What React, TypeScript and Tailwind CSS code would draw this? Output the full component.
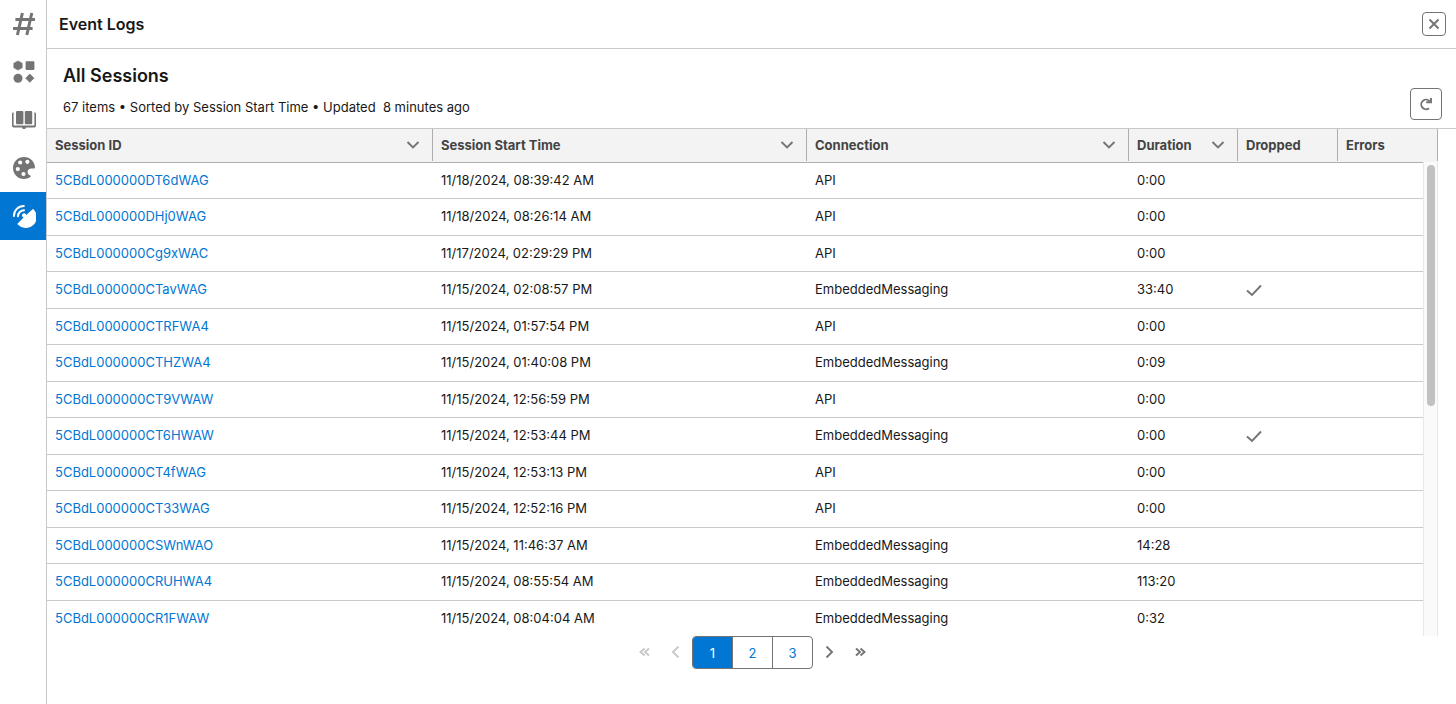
import type { ReactNode } from "react";
import { clsx } from "clsx";

type Session = {
  id: string;
  start: string;
  connection: string;
  duration: string;
  dropped?: boolean;
};

const SESSIONS: Session[] = [
  { id: "5CBdL000000DT6dWAG", start: "11/18/2024, 08:39:42 AM", connection: "API", duration: "0:00" },
  { id: "5CBdL000000DHj0WAG", start: "11/18/2024, 08:26:14 AM", connection: "API", duration: "0:00" },
  { id: "5CBdL000000Cg9xWAC", start: "11/17/2024, 02:29:29 PM", connection: "API", duration: "0:00" },
  { id: "5CBdL000000CTavWAG", start: "11/15/2024, 02:08:57 PM", connection: "EmbeddedMessaging", duration: "33:40", dropped: true },
  { id: "5CBdL000000CTRFWA4", start: "11/15/2024, 01:57:54 PM", connection: "API", duration: "0:00" },
  { id: "5CBdL000000CTHZWA4", start: "11/15/2024, 01:40:08 PM", connection: "EmbeddedMessaging", duration: "0:09" },
  { id: "5CBdL000000CT9VWAW", start: "11/15/2024, 12:56:59 PM", connection: "API", duration: "0:00" },
  { id: "5CBdL000000CT6HWAW", start: "11/15/2024, 12:53:44 PM", connection: "EmbeddedMessaging", duration: "0:00", dropped: true },
  { id: "5CBdL000000CT4fWAG", start: "11/15/2024, 12:53:13 PM", connection: "API", duration: "0:00" },
  { id: "5CBdL000000CT33WAG", start: "11/15/2024, 12:52:16 PM", connection: "API", duration: "0:00" },
  { id: "5CBdL000000CSWnWAO", start: "11/15/2024, 11:46:37 AM", connection: "EmbeddedMessaging", duration: "14:28" },
  { id: "5CBdL000000CRUHWA4", start: "11/15/2024, 08:55:54 AM", connection: "EmbeddedMessaging", duration: "113:20" },
  { id: "5CBdL000000CR1FWAW", start: "11/15/2024, 08:04:04 AM", connection: "EmbeddedMessaging", duration: "0:32" },
];

const COLUMNS = [
  { label: "Session ID",         width: "w-[386px]", menu: true },
  { label: "Session Start Time", width: "w-[374px]", menu: true },
  { label: "Connection",         width: "w-[322px]", menu: true },
  { label: "Duration",           width: "w-[109px]", menu: true },
  { label: "Dropped",            width: "w-[100px]", menu: false },
  { label: "Errors",             width: "w-[100px]", menu: false },
];

const NAV = [
  { label: "Channels",   icon: <HashIcon /> },
  { label: "Components", icon: <ShapesIcon /> },
  { label: "Library",    icon: <BookIcon /> },
  { label: "Theme",      icon: <PaletteIcon /> },
  { label: "Event Logs", icon: <DishIcon />, active: true },
];

export default function App() {
  return (
    <div className="flex h-screen bg-white font-['Inter','Liberation_Sans',sans-serif] text-[13px] leading-5 text-[#181818]">
      <nav className="flex w-[47px] shrink-0 flex-col border-r border-[#c9c9c9]">
        {NAV.map((n) => (
          <button
            key={n.label}
            aria-label={n.label}
            className={clsx(
              "flex h-12 items-center justify-center",
              n.active ? "bg-[#0176d3] text-white" : "text-[#747474]"
            )}
          >
            {n.icon}
          </button>
        ))}
      </nav>

      <main className="flex min-w-0 flex-1 flex-col">
        <header className="flex h-[49px] shrink-0 items-center justify-between border-b border-[#c9c9c9] pr-[10px] pl-3">
          <h1 className="text-base font-semibold">Event Logs</h1>
          <button
            aria-label="Close"
            className="flex size-6 items-center justify-center rounded border border-[#747474] text-[#747474]"
          >
            <Glyph size={12} d="M1.5 1.5 10.5 10.5M10.5 1.5 1.5 10.5" />
          </button>
        </header>

        <section className="flex h-20 shrink-0 items-end justify-between border-b border-[#c9c9c9] pr-[14px] pb-2 pl-4">
          <div className="flex flex-col gap-[9px] pb-[3px]">
            <h2 className="text-lg leading-6 font-semibold">All Sessions</h2>
            <p className="whitespace-pre">67 items • Sorted by Session Start Time • Updated  8 minutes ago</p>
          </div>
          <button
            aria-label="Refresh"
            className="flex size-8 items-center justify-center rounded border border-[#747474] text-[#747474]"
          >
            <RefreshIcon />
          </button>
        </section>

        <SessionTable />
        <Pagination />
      </main>
    </div>
  );
}

function SessionTable() {
  return (
    <div className="relative mr-[18px] min-h-0 flex-1 overflow-hidden">
      <table className="w-full table-fixed border-separate border-spacing-0 text-left">
        <thead>
          <tr>
            {COLUMNS.map((c) => (
              <th key={c.label} className={clsx("h-[34px] border-b border-[#aeaeae] bg-[#f3f3f3] p-0 align-top", c.width)}>
                <div className="flex h-8 items-center justify-between border-r border-[#aeaeae] pr-3 pl-2 font-bold text-[#444]">
                  {c.label}
                  {c.menu && (
                    <button aria-label={`${c.label} actions`} className="text-[#747474]">
                      <Glyph size={14} d="M1.5 4 7 9.5 12.5 4" />
                    </button>
                  )}
                </div>
              </th>
            ))}
          </tr>
        </thead>
        <tbody>
          {SESSIONS.map((s) => (
            <tr
              key={s.id}
              className="odd:h-9 even:h-[37px] [&>td]:border-b [&>td]:border-[#c9c9c9] [&>td]:px-2 [&>td]:pt-0 [&>td]:pb-[2px]"
            >
              <td>
                <a href={`#${s.id}`} className="text-[#0176d3]">{s.id}</a>
              </td>
              <td>{s.start}</td>
              <td>{s.connection}</td>
              <td>{s.duration}</td>
              <td className="text-[#747474]">
                {s.dropped && <Glyph size={16} d="M1 9.5 6 14 15 4.5" />}
              </td>
              <td />
            </tr>
          ))}
        </tbody>
      </table>

      {/* scrollbar */}
      <div className="absolute top-[33px] right-0 bottom-0 w-[15px] border-x border-[#e8e8e8] bg-[#fafafa] px-[3px] pt-[3px]">
        <div className="h-[241px] w-2 rounded-full bg-[#c1c1c1]" />
      </div>
    </div>
  );
}

function Pagination() {
  return (
    <div className="flex h-[68px] shrink-0 items-start justify-center pl-[2px]">
      <PageArrow label="First page" disabled d="M6.5 2.5 2.5 6 6.5 9.5M11 2.5 7 6 11 9.5" />
      <PageArrow label="Previous page" disabled d="M8.5 .5 3 6 8.5 11.5" />
      <div className="flex h-[33px] w-[121px] overflow-hidden rounded border border-[#747474]">
        {[1, 2, 3].map((p) => (
          <button
            key={p}
            className={clsx(
              "flex-1 border-r border-[#747474] last:border-r-0",
              p === 1 ? "bg-[#0176d3] text-white" : "text-[#0176d3]"
            )}
          >
            {p}
          </button>
        ))}
      </div>
      <PageArrow label="Next page" d="M3.5 .5 9 6 3.5 11.5" />
      <PageArrow label="Last page" d="M1 2.5 5 6 1 9.5M5.5 2.5 9.5 6 5.5 9.5" />
    </div>
  );
}

function PageArrow({ label, d, disabled }: { label: string; d: string; disabled?: boolean }) {
  return (
    <button
      aria-label={label}
      disabled={disabled}
      className={clsx("flex size-8 items-center justify-center", disabled ? "text-[#c9c9c9]" : "text-[#747474]")}
    >
      <Glyph size={12} d={d} />
    </button>
  );
}

function Glyph({ size, d }: { size: number; d: string }) {
  return (
    <svg width={size} height={size} viewBox={`0 0 ${size} ${size}`} fill="none" stroke="currentColor" strokeWidth="1.9" aria-hidden>
      <path d={d} />
    </svg>
  );
}

function NavSvg({ children }: { children: ReactNode }) {
  return (
    <svg className="ml-px size-6" viewBox="0 0 24 24" fill="currentColor" aria-hidden>
      {children}
    </svg>
  );
}

function HashIcon() {
  return (
    <NavSvg>
      <path fill="none" stroke="currentColor" strokeWidth="3" d="M10.4 1 5.4 23M19.8 1 14.8 23M3.4 7.6H23M1 16.4H20.6" />
    </NavSvg>
  );
}

function ShapesIcon() {
  return (
    <NavSvg>
      <path d="M6 .9 10.2 3.2V7.8L6 10.1 1.8 7.8V3.2Z" stroke="currentColor" strokeWidth=".6" strokeLinejoin="round" />
      <rect x="13.6" y="1.2" width="8.8" height="8.7" rx=".8" />
      <circle cx="6" cy="18.2" r="4.5" />
      <path d="M17.8 14.1 21.9 18.2 17.8 22.3 13.7 18.2Z" stroke="currentColor" strokeWidth=".8" strokeLinejoin="round" />
    </NavSvg>
  );
}

function BookIcon() {
  return (
    <NavSvg>
      <rect x="4" y="3" width="7.4" height="13.3" rx="1" />
      <rect x="12.8" y="3" width="7.4" height="13.3" rx="1" />
      <path d="M0 5.5Q0 4.5 1.6 4.3V17.6H22.4V4.3Q24 4.5 24 5.5V17.8Q24 19.5 22.3 19.5H14Q13.6 21 12.6 21H11.4Q10.4 21 10 19.5H1.7Q0 19.5 0 17.8Z" />
    </NavSvg>
  );
}

function PaletteIcon() {
  return (
    <NavSvg>
      <path
        fillRule="evenodd"
        d="M12 1C5.9 1 1 5.9 1 12s4.900 11 11 11c2.400 0 4.600-.7 6.300-1.900.8-.6.5-1.500-.4-1.900-1.400-.6-2.300-1.900-2.300-3.300 0-2.100 1.600-3.500 3.600-3.500h2.600c.9 0 1.300-.6 1.200-1.500C22.500 5.800 18.200 1 12 1ZM8.200 4.400a2.100 2.100 0 1 1 0 4.200 2.100 2.100 0 0 1 0-4.200ZM15.400 3.700a2.100 2.100 0 1 1 0 4.200 2.100 2.100 0 0 1 0-4.200ZM5.800 11a2.100 2.100 0 1 1 0 4.200 2.100 2.100 0 0 1 0-4.200ZM11.500 15.900a2.100 2.100 0 1 1 0 4.200 2.100 2.100 0 0 1 0-4.200Z"
      />
    </NavSvg>
  );
}

function DishIcon() {
  return (
    <NavSvg>
      <path d="M20.500 5.200Q21.300 4.700 21.700 5.500A10 10 0 0 1 6 20.700Q5.100 20.100 5.900 19.300L11.600 13.600A2.200 2.200 0 1 1 14.300 11Z" />
      <path fill="none" stroke="currentColor" strokeWidth="2" strokeLinecap="round" d="M1.900 12A10 10 0 0 1 11.800 1.900M6 12.300A6.200 6.200 0 0 1 12 6.200" />
    </NavSvg>
  );
}

function RefreshIcon() {
  return (
    <svg width="14" height="14" viewBox="0 0 14 14" fill="none" stroke="currentColor" strokeWidth="1.900" aria-hidden>
      <path d="M10 11.200A4.800 4.800 0 1 1 10.800 4.400" />
      <path d="M12 1V5.200H7.200" />
    </svg>
  );
}
